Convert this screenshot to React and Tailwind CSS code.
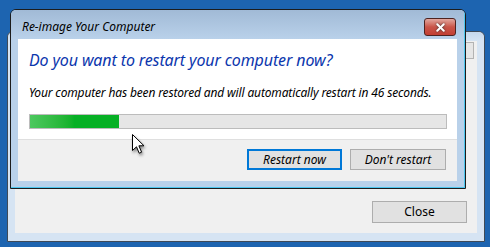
import { X } from 'lucide-react';

function Cursor() {
  return (
    <svg
      className="absolute left-[131px] top-[133px]"
      width="16"
      height="24"
      viewBox="0 0 16 24"
      style={{ filter: 'drop-shadow(1px 2px 1.5px rgba(0,0,0,0.45))' }}
    >
      <path
        d="M1.5 1.5 L1.5 17.5 L5.5 13.8 L8.2 20.2 L10.6 19.2 L7.9 12.8 L13 12.8 Z"
        fill="#fff"
        stroke="#000"
        strokeWidth="1"
        strokeLinejoin="miter"
      />
    </svg>
  );
}

function Btn({ children, focused, className = '' }) {
  return (
    <button
      className={`h-[21px] bg-[#e1e1e1] text-[12px] text-black leading-none ${
        focused ? 'border-2 border-[#0078d7]' : 'border border-[#adadad]'
      } ${className}`}
    >
      {children}
    </button>
  );
}

export default function App() {
  return (
    <div
      className="relative w-[490px] h-[247px] overflow-hidden bg-[#1d64b0]"
      style={{ fontFamily: '"Noto Sans", "Open Sans", sans-serif' }}
    >
      {/* back window */}
      <div className="absolute left-[7px] top-[31px] w-[478px] h-[211px] rounded-t-[6px] border border-[#3f4a57] bg-[#d6e4f3] flex flex-col">
        <div className="h-[9px] rounded-t-[6px] bg-gradient-to-b from-[#c6d8ec] to-[#d6e4f3]" />
        <div className="relative flex-1 mx-[7px] mb-[8px] bg-[#f0f0f0] flex items-end justify-end pr-[10px] pb-[10px]">
          <div className="absolute right-[3px] top-[1px] w-[10px] h-[17px] border border-[#b3b3b3] bg-[#e6e6e6]" />
          <button className="w-[95px] h-[22px] bg-[#e1e1e1] border border-[#adadad] text-[12px] text-black leading-none">
            Close
          </button>
        </div>
      </div>

      {/* front window */}
      <div className="absolute left-[10px] top-[9px] w-[456px] h-[180px] rounded-t-[6px] border border-[#1c1c1c] overflow-hidden">
        <div className="w-full h-full flex flex-col bg-[#b9d1ea] border-r border-b border-[#4cc6ee]">
          <div className="h-[29px] shrink-0 flex items-start justify-between pl-[11px] pr-[8px] bg-gradient-to-b from-[#a1bad6] to-[#b9d1ea]">
            <span className="mt-[11px] italic text-[12px] text-black leading-none">Re-image Your Computer</span>
            <div className="mt-[8px] w-[32px] h-[18px] rounded-[3px] border border-[#4e2320] bg-gradient-to-b from-[#e1a79f] via-[#c95448] to-[#c33f33] flex items-center justify-center">
              <X size={13} strokeWidth={3.6} color="#fff" style={{ filter: 'drop-shadow(0 0 1px #333)' }} />
            </div>
          </div>
          <div className="flex-1 mx-[7px] mb-[6px] flex flex-col italic">
            <div className="bg-white pl-[11px] pr-[10px] pt-[10px] pb-[10px] flex flex-col">
              <div className="text-[16px] leading-[22px] tracking-[-0.12px] text-[#0b36ad]">
                Do you want to restart your computer now?
              </div>
              <div className="mt-[14px] text-[12px] leading-[16px] tracking-[-0.15px] text-black">
                Your computer has been restored and will automatically restart in 46 seconds.
              </div>
              <div className="mt-[13px] h-[15px] border border-[#bcbcbc] bg-[#e6e6e6]">
                <div className="h-full w-[89px] bg-gradient-to-r from-[#4cc85e] via-[#06b025] to-[#06b025]" />
              </div>
            </div>
            <div className="flex-1 border-t border-[#dfdfdf] bg-[#f0f0f0] flex justify-end items-start gap-[8px] pt-[9px] pr-[11px]">
              <Btn focused className="w-[95px] italic">Restart now</Btn>
              <Btn className="w-[96px] italic">Don't restart</Btn>
            </div>
          </div>
        </div>
      </div>

      <Cursor />
    </div>
  );
}
